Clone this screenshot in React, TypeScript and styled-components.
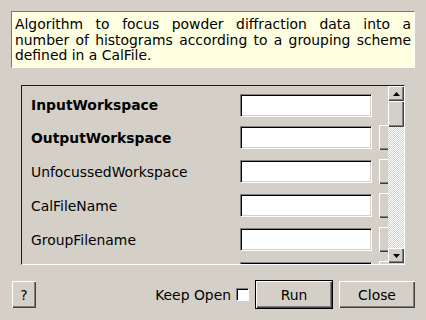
import styled, { createGlobalStyle } from "styled-components";

type Property = {
  name: string;
  mandatory: boolean;
  browse: boolean;
};

const PROPERTIES: Property[] = [
  { name: "InputWorkspace", mandatory: true, browse: false },
  { name: "OutputWorkspace", mandatory: true, browse: true },
  { name: "UnfocussedWorkspace", mandatory: false, browse: true },
  { name: "CalFileName", mandatory: false, browse: true },
  { name: "GroupFilename", mandatory: false, browse: true },
  { name: "", mandatory: false, browse: true },
];

const GlobalStyle = createGlobalStyle`
  html, body {
    margin: 0;
    padding: 0;
    height: 320px;
    overflow: hidden;
    background: #d4d0c8;
  }
  body {
    font-family: "DejaVu Sans", "Liberation Sans", sans-serif;
    font-size: 13.9px;
    color: #000;
  }
`;

function App() {
  return (
    <>
      <GlobalStyle />
      <Dialog>
        <Description>
          Algorithm to focus powder diffraction data into a number of histograms
          according to a grouping scheme defined in a CalFile.
        </Description>

        <ScrollBox>
          <Viewport>
            {PROPERTIES.map((p, i) => (
              <Row key={i} $tall={p.browse}>
                <Label $bold={p.mandatory}>{p.name}</Label>
                <TextInput />
                {p.browse && <BrowseButton />}
              </Row>
            ))}
          </Viewport>
          <ScrollBar>
            <ArrowButton>
              <svg width="7" height="4" viewBox="0 0 7 4">
                <polygon points="3.5,0 7,4 0,4" fill="#000" />
              </svg>
            </ArrowButton>
            <Thumb />
            <Track />
            <ArrowButton>
              <svg width="7" height="4" viewBox="0 0 7 4">
                <polygon points="0,0 7,0 3.5,4" fill="#000" />
              </svg>
            </ArrowButton>
          </ScrollBar>
        </ScrollBox>

        <ButtonRow>
          <HelpButton>?</HelpButton>
          <Spacer />
          <KeepOpen>
            Keep Open
            <CheckBox />
          </KeepOpen>
          <PushButton $default>Run</PushButton>
          <PushButton>Close</PushButton>
        </ButtonRow>
      </Dialog>
    </>
  );
}

const raised = `
  background: #d4d0c8;
  box-shadow: inset 1px 1px #ffffff, inset -1px -1px #404040, inset -2px -2px #808080;
`;

const Dialog = styled.div`
  display: flex;
  flex-direction: column;
  padding: 11px 11px 0 11px;
`;

const Description = styled.div`
  background: #fefee1;
  border-top: 1px solid #7a7874;
  border-left: 1px solid #7a7874;
  border-right: 1px solid #ffffff;
  border-bottom: 1px solid #ffffff;
  padding: 5px 3px 3px 3px;
  line-height: 15.5px;
  text-align: justify;
  height: 47px;
`;

const ScrollBox = styled.div`
  display: flex;
  margin: 17px 10px 0 10px;
  height: 178px;
  border-top: 1px solid #1a1a1a;
  border-left: 1px solid #1a1a1a;
  border-right: 1px solid #ffffff;
  border-bottom: 1px solid #ffffff;
`;

const Viewport = styled.div`
  flex: 1;
  min-width: 0;
  overflow: hidden;
  display: flex;
  flex-direction: column;
  align-items: flex-start;
  gap: 9px;
  padding: 8px 0 0 9px;
`;

const Row = styled.div<{ $tall: boolean }>`
  display: flex;
  align-items: center;
  height: ${(p) => (p.$tall ? 25 : 22)}px;
  flex-shrink: 0;
`;

const Label = styled.span<{ $bold: boolean }>`
  width: 209px;
  flex-shrink: 0;
  font-weight: ${(p) => (p.$bold ? "bold" : "normal")};
  white-space: nowrap;
`;

const TextInput = styled.div`
  width: 132px;
  height: 23px;
  flex-shrink: 0;
  box-sizing: border-box;
  background: #ffffff;
  border-top: 1px solid #808080;
  border-left: 1px solid #808080;
  border-right: 1px solid #ffffff;
  border-bottom: 1px solid #ffffff;
  box-shadow: inset 1px 1px #000000, inset -1px -1px #d4d0c8;
`;

const BrowseButton = styled.div`
  width: 26px;
  height: 25px;
  margin-left: 7px;
  flex-shrink: 0;
  ${raised}
`;

const ScrollBar = styled.div`
  width: 16px;
  flex-shrink: 0;
  display: flex;
  flex-direction: column;
  padding-bottom: 1px;
`;

const ArrowButton = styled.div`
  height: 15px;
  display: flex;
  align-items: center;
  justify-content: center;
  flex-shrink: 0;
  ${raised}
`;

const Thumb = styled.div`
  height: 26px;
  flex-shrink: 0;
  ${raised}
`;

const Track = styled.div`
  flex: 1;
  background-color: #d4d0c8;
  background-image: conic-gradient(#ffffff 25%, #d4d0c8 0 50%, #ffffff 0 75%, #d4d0c8 0);
  background-size: 2px 2px;
`;

const ButtonRow = styled.div`
  display: flex;
  align-items: center;
  margin-top: 15px;
  padding-left: 1px;
  gap: 6px;
`;

const Spacer = styled.div`
  flex: 1;
`;

const PushButton = styled.button<{ $default?: boolean }>`
  font-family: inherit;
  font-size: 13.9px;
  color: #000;
  border: none;
  box-sizing: border-box;
  width: ${(p) => (p.$default ? 78 : 76)}px;
  height: ${(p) => (p.$default ? 29 : 27)}px;
  padding: 0;
  ${raised}
  ${(p) =>
    p.$default &&
    `
    border: 1px solid #000;
  `}
`;

const HelpButton = styled(PushButton)`
  width: 24px;
`;

const KeepOpen = styled.label`
  display: flex;
  align-items: center;
  gap: 5px;
`;

const CheckBox = styled.span`
  width: 13px;
  height: 13px;
  box-sizing: border-box;
  background: #fff;
  border-top: 1px solid #808080;
  border-left: 1px solid #808080;
  border-right: 1px solid #fff;
  border-bottom: 1px solid #fff;
  box-shadow: inset 1px 1px #000;
`;

export default App;
